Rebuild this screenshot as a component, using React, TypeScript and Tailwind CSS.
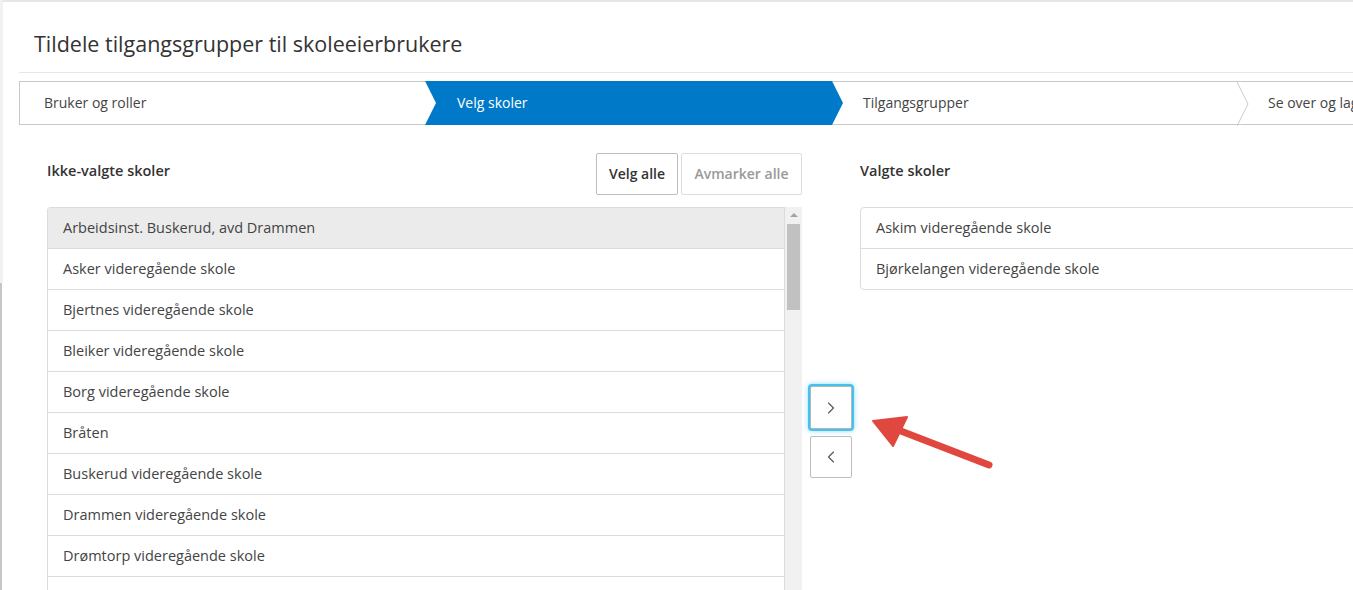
import { ChevronLeft, ChevronRight } from "lucide-react";

const unselected = [
  "Arbeidsinst. Buskerud, avd Drammen",
  "Asker videregående skole",
  "Bjertnes videregående skole",
  "Bleiker videregående skole",
  "Borg videregående skole",
  "Bråten",
  "Buskerud videregående skole",
  "Drammen videregående skole",
  "Drømtorp videregående skole",
  "Eikeli videregående skole",
];

const selected = ["Askim videregående skole", "Bjørkelangen videregående skole"];

function Stepper() {
  return (
    <div className="flex h-[44px] w-[1700px] border border-[#c9c9c9] text-[14px] text-[#444]">
      <div className="flex w-[405px] shrink-0 items-center pb-[2px] pl-[24px]">Bruker og roller</div>
      {/* active step, arrow shape */}
      <div
        className="relative z-10 -my-px mr-[-11px] flex w-[418px] shrink-0 items-center bg-[#0079c8] pb-[2px] pl-[32px] text-white"
        style={{ clipPath: "polygon(0 0, 407px 0, 418px 50%, 407px 100%, 0 100%, 11px 50%)" }}
      >
        Velg skoler
      </div>
      <div className="relative flex w-[405px] shrink-0 items-center pb-[2px] pl-[31px]">
        Tilgangsgrupper
        <svg className="absolute right-[-12px] top-0 h-[44px] w-[12px]" viewBox="0 0 12 44">
          <polyline points="0,0 11,22 0,44" fill="none" stroke="#c9c9c9" strokeWidth="1" />
        </svg>
      </div>
      <div className="flex w-[405px] shrink-0 items-center pb-[2px] pl-[31px]">Se over og lagre</div>
    </div>
  );
}

export default function App() {
  return (
    <div
      className="flex h-[590px] w-full overflow-hidden bg-white"
      style={{ fontFamily: '"Open Sans", "Noto Sans", sans-serif' }}
    >
      {/* left edge */}
      <div className="flex w-[3px] shrink-0 flex-col">
        <div className="h-[283px] bg-[#f1f1f1]" />
        <div className="flex-1 w-[2px] bg-[#c6c6c6]" />
      </div>

      <div className="relative flex-1 min-w-0 border-t-2 border-[#e4e6e8] px-[16px]">
        <h1 className="pl-[15px] pt-[28px] text-[21.5px] leading-[28px] text-[#333]">
          Tildele tilgangsgrupper til skoleeierbrukere
        </h1>
        <div className="mt-[14px] h-px w-[1700px] bg-[#e6e6e6]" />

        <div className="mt-[8px]">
          <Stepper />
        </div>

        <div className="mt-[28px] flex pl-[28px]">
          {/* left column */}
          <div className="w-[755px] shrink-0">
            <div className="flex h-[42px] items-center justify-between">
              <span className="pb-[6px] text-[14.5px] font-semibold text-[#333]">Ikke-valgte skoler</span>
              <div className="flex gap-[3px]">
                <button className="h-[42px] w-[82px] rounded-[2px] border border-[#bdbdbd] bg-white pb-[2px] text-[14px] font-semibold text-[#333]">
                  Velg alle
                </button>
                <button className="h-[42px] w-[121px] rounded-[2px] border border-[#dcdcdc] bg-white pb-[2px] text-[14px] font-semibold text-[#999]">
                  Avmarker alle
                </button>
              </div>
            </div>
            <div className="mt-[12px] flex">
              <ul className="flex-1 rounded-tl-[4px] border-l border-t border-r border-[#dcdcdc]">
                {unselected.map((s, i) => (
                  <li
                    key={s}
                    className={`flex h-[41px] items-center border-b border-[#dcdcdc] pb-[1px] pl-[15px] text-[14.5px] text-[#444] ${
                      i === 0 ? "rounded-tl-[4px] bg-[#ebebeb]" : ""
                    }`}
                  >
                    {s}
                  </li>
                ))}
              </ul>
              <div className="flex w-[17px] shrink-0 flex-col items-center bg-[#f1f1f1]">
                <div className="mt-[6px] h-0 w-0 border-x-[4px] border-b-[4px] border-x-transparent border-b-[#a3a3a3]" />
                <div className="mt-[7px] h-[86px] w-[13px] bg-[#c1c1c1]" />
              </div>
            </div>
          </div>

          {/* move buttons */}
          <div className="ml-[8px] flex w-[42px] shrink-0 flex-col gap-[7px] pt-[233px]">
            <button className="flex h-[43px] w-[42px] items-center justify-center rounded-[2px] border border-[#b5b5b5] bg-white shadow-[0_0_0_2px_#44c2ee,0_0_5px_2px_rgba(68,194,238,0.6)]">
              <ChevronRight className="h-[20px] w-[20px] text-[#555]" strokeWidth={1.3} />
            </button>
            <button className="flex h-[42px] w-[42px] items-center justify-center rounded-[2px] border border-[#bdbdbd] bg-white">
              <ChevronLeft className="h-[20px] w-[20px] text-[#555]" strokeWidth={1.3} />
            </button>
          </div>

          {/* right column */}
          <div className="ml-[8px] w-[755px] shrink-0">
            <div className="flex h-[42px] items-center">
              <span className="pb-[6px] text-[14.5px] font-semibold text-[#333]">Valgte skoler</span>
            </div>
            <ul className="mt-[12px] rounded-[4px] border border-[#dcdcdc]">
              {selected.map((s, i) => (
                <li
                  key={s}
                  className={`flex items-center pb-[1px] pl-[15px] text-[14.5px] text-[#444] ${
                    i < selected.length - 1 ? "h-[41px] border-b border-[#dcdcdc]" : "h-[40px]"
                  }`}
                >
                  {s}
                </li>
              ))}
            </ul>
          </div>
        </div>

        {/* annotation arrow */}
        <svg
          className="pointer-events-none absolute left-[850px] top-[395px] h-[90px] w-[160px]"
          viewBox="850 395 160 90"
        >
          <line x1="986" y1="463" x2="890" y2="426" stroke="#e0483f" strokeWidth="7" strokeLinecap="round" />
          <polygon points="870,419 904,415 890,444" fill="#e0483f" stroke="#e0483f" strokeWidth="2" strokeLinejoin="round" />
        </svg>
      </div>
    </div>
  );
}
